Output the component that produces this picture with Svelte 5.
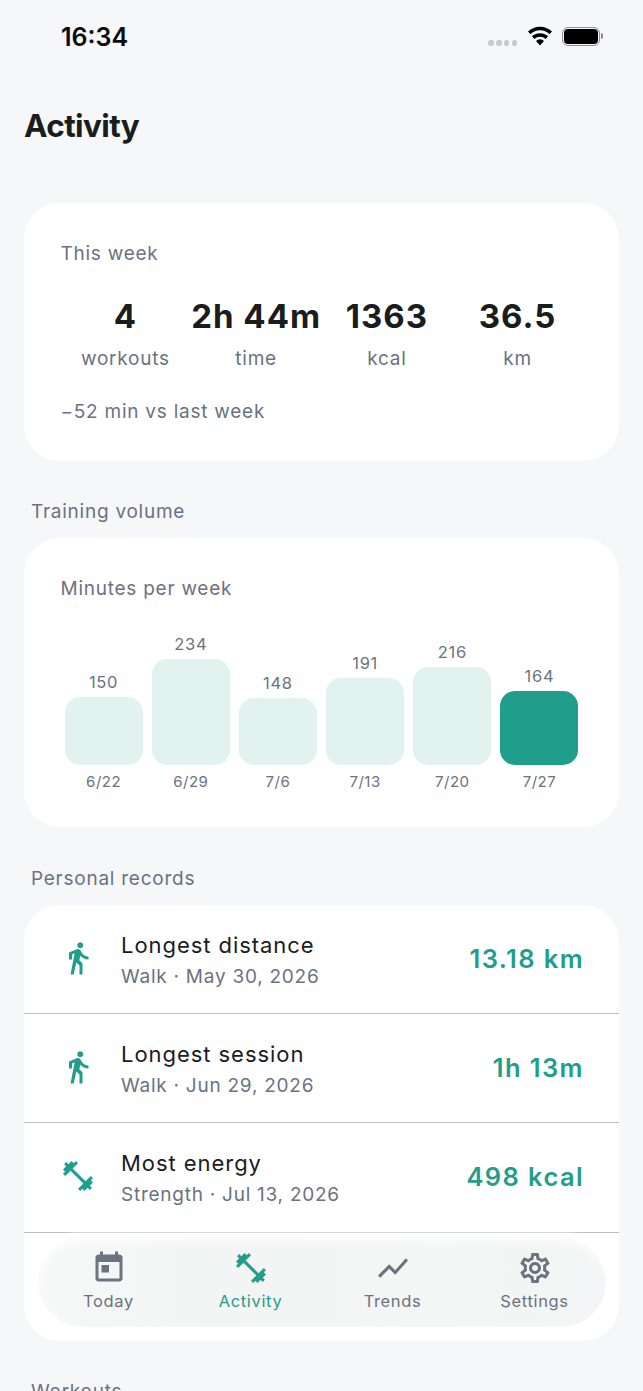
<script>
  const stats = [
    { value: "4", label: "workouts" },
    { value: "2h 44m", label: "time" },
    { value: "1363", label: "kcal" },
    { value: "36.5", label: "km" },
  ];

  const weeks = [
    { mins: 150, date: "6/22" },
    { mins: 234, date: "6/29" },
    { mins: 148, date: "7/6" },
    { mins: 191, date: "7/13" },
    { mins: 216, date: "7/20" },
    { mins: 164, date: "7/27", current: true },
  ];

  const records = [
    { icon: "walk", title: "Longest distance", sub: "Walk · May 30, 2026", value: "13.18 km" },
    { icon: "walk", title: "Longest session", sub: "Walk · Jun 29, 2026", value: "1h 13m" },
    { icon: "gym", title: "Most energy", sub: "Strength · Jul 13, 2026", value: "498 kcal" },
  ];

  const tabs = [
    { icon: "today", label: "Today" },
    { icon: "gym", label: "Activity", active: true },
    { icon: "chart", label: "Trends" },
    { icon: "gear", label: "Settings" },
  ];

  const paths = {
    walk: "M13.5 5.5c1.1 0 2-.9 2-2s-.9-2-2-2-2 .9-2 2 .9 2 2 2zM9.8 8.9L7 23h2.1l1.8-8 2.1 2v6h2v-7.5l-2.1-2 .6-3C14.8 12 16.8 13 19 13v-2c-1.9 0-3.5-1-4.3-2.4l-1-1.6c-.4-.6-1-1-1.7-1-.3 0-.5.1-.8.1L6 8.3V13h2V9.6l1.8-.7",
    gym: "M20.57 14.86L22 13.43 20.57 12 17 15.57 8.43 7 12 3.43 10.57 2 9.14 3.43 7.71 2 5.57 4.14 4.14 2.71 2.71 4.14l1.43 1.43L2 7.71l1.43 1.43L2 10.57 3.43 12 7 8.43 15.57 17 12 20.57 13.43 22l1.43-1.43L16.29 22l2.14-2.14 1.43 1.43 1.43-1.43-1.43-1.43L22 16.29z",
    today: "M19 3h-1V1h-2v2H8V1H6v2H5c-1.11 0-1.99.9-1.99 2L3 19c0 1.1.89 2 2 2h14c1.1 0 2-.9 2-2V5c0-1.1-.9-2-2-2zm0 16H5V8h14v11zM7 10h5v5H7z",
    chart: "M3.5 18.49l6-6.01 4 4L22 6.92l-1.41-1.41-7.09 7.97-4-4L2 16.99z",
    gear: "M19.43 12.98c.04-.32.07-.64.07-.98 0-.34-.03-.66-.07-.98l2.11-1.65c.19-.15.24-.42.12-.64l-2-3.46c-.09-.16-.26-.25-.44-.25-.06 0-.12.01-.17.03l-2.49 1c-.52-.4-1.08-.73-1.69-.98l-.38-2.65C14.46 2.18 14.25 2 14 2h-4c-.25 0-.46.18-.49.42l-.38 2.65c-.61.25-1.17.59-1.69.98l-2.49-1c-.06-.02-.12-.03-.18-.03-.17 0-.34.09-.43.25l-2 3.46c-.13.22-.07.49.12.64l2.11 1.65c-.04.32-.07.65-.07.98 0 .33.03.66.07.98l-2.11 1.65c-.19.15-.24.42-.12.64l2 3.46c.09.16.26.25.44.25.06 0 .12-.01.17-.03l2.49-1c.52.4 1.08.73 1.69.98l.38 2.65c.03.24.24.42.49.42h4c.25 0 .46-.18.49-.42l.38-2.65c.61-.25 1.17-.59 1.69-.98l2.49 1c.06.02.12.03.18.03.17 0 .34-.09.43-.25l2-3.46c.12-.22.07-.49-.12-.64l-2.11-1.65zm-1.98-1.71c.04.31.05.52.05.73 0 .21-.02.43-.05.73l-.14 1.13.89.7 1.08.84-.7 1.21-1.27-.51-1.04-.42-.9.68c-.43.32-.84.56-1.25.73l-1.06.43-.16 1.13-.2 1.35h-1.4l-.19-1.35-.16-1.13-1.06-.43c-.43-.18-.83-.41-1.23-.71l-.91-.7-1.06.43-1.27.51-.7-1.21 1.08-.84.89-.7-.14-1.13c-.03-.31-.05-.54-.05-.74s.02-.43.05-.73l.14-1.13-.89-.7-1.08-.84.7-1.21 1.27.51 1.04.42.9-.68c.43-.32.84-.56 1.25-.73l1.06-.43.16-1.13.2-1.35h1.39l.19 1.35.16 1.13 1.06.43c.43.18.83.41 1.23.71l.91.7 1.06-.43 1.27-.51.7 1.21-1.07.85-.89.7.14 1.13zM12 8c-2.21 0-4 1.79-4 4s1.79 4 4 4 4-1.79 4-4-1.79-4-4-4zm0 6c-1.1 0-2-.9-2-2s.9-2 2-2 2 .9 2 2-.9 2-2 2z",
  };
</script>

<div class="screen">
  <div class="status">
    <span class="clock">16:34</span>
    <div class="status-icons">
      <div class="dots"><i></i><i></i><i></i><i></i></div>
      <svg class="wifi" width="26" height="20" viewBox="0 0 26 20">
        <path d="M13 19.5l-4-4.6a5.8 5.8 0 0 1 8 0z" />
        <path d="M6.2 11.6a10 10 0 0 1 13.6 0" class="arc" />
        <path d="M2.2 6.8a15.8 15.8 0 0 1 21.6 0" class="arc" />
      </svg>
      <div class="battery"><div class="charge"></div></div>
    </div>
  </div>

  <h1>Activity</h1>

  <section class="card week">
    <p class="card-title">This week</p>
    <div class="stats">
      {#each stats as s}
        <div class="stat">
          <span class="stat-value">{s.value}</span>
          <span class="stat-label">{s.label}</span>
        </div>
      {/each}
    </div>
    <p class="delta">−52 min vs last week</p>
  </section>

  <h2>Training volume</h2>
  <section class="card volume">
    <p class="card-title">Minutes per week</p>
    <div class="chart">
      {#each weeks as w}
        <div class="col">
          <span class="mins">{w.mins}</span>
          <div class="bar" class:current={w.current} style="height: {w.mins * 0.4533}px"></div>
          <span class="date">{w.date}</span>
        </div>
      {/each}
    </div>
  </section>

  <h2>Personal records</h2>
  <section class="card records">
    {#each records as r}
      <div class="record">
        <svg class="record-icon" width="36" height="36" viewBox="0 0 24 24"><path d={paths[r.icon]} /></svg>
        <div class="record-text">
          <span class="record-title">{r.title}</span>
          <span class="record-sub">{r.sub}</span>
        </div>
        <span class="record-value">{r.value}</span>
      </div>
    {/each}
    <div class="record empty"></div>
  </section>

  <h2>Workouts</h2>

  <nav class="tabbar">
    {#each tabs as t}
      <div class="tab" class:active={t.active}>
        <svg width="36" height="36" viewBox="0 0 24 24"><path d={paths[t.icon]} /></svg>
        <span>{t.label}</span>
      </div>
    {/each}
  </nav>
</div>

<style>
  :global(body) {
    margin: 0;
    background: #f6f7f9;
  }

  .screen {
    position: relative;
    height: 1391px;
    overflow: hidden;
    padding: 0 24px;
    box-sizing: border-box;
    background: #f6f7f9;
    font-family: Inter, "Noto Sans", sans-serif;
    color: #1a1c1e;
  }

  /* status bar */
  .status {
    display: flex;
    justify-content: space-between;
    align-items: center;
    height: 36px;
    padding: 18px 19px 0 37px;
  }
  .clock {
    position: relative;
    top: 1px;
    font-size: 25px;
    font-weight: 600;
    color: #0b0b0c;
  }
  .status-icons {
    display: flex;
    align-items: center;
  }
  .dots {
    display: flex;
    gap: 2.2px;
    margin: 14px 10px 0 0;
  }
  .dots i {
    width: 5.5px;
    height: 5.5px;
    border-radius: 50%;
    background: #c9cacc;
  }
  .wifi {
    margin-right: 9px;
  }
  .wifi path {
    fill: #000;
  }
  .wifi .arc {
    fill: none;
    stroke: #000;
    stroke-width: 3.6;
  }
  .battery {
    position: relative;
    width: 34px;
    height: 15px;
    padding: 1px;
    border: 1.5px solid #8e8e90;
    border-radius: 6px;
  }
  .battery::after {
    content: "";
    position: absolute;
    right: -4px;
    top: 5px;
    width: 2px;
    height: 6px;
    border-radius: 0 2px 2px 0;
    background: #8e8e90;
  }
  .charge {
    width: 100%;
    height: 100%;
    border-radius: 4px;
    background: #000;
  }

  h1 {
    margin: 51px 0 0;
    font-size: 31.5px;
    line-height: 42px;
    font-weight: 700;
    letter-spacing: -0.6px;
  }

  h2 {
    margin: 0 0 14px 7px;
    font-size: 19px;
    line-height: 24px;
    font-weight: 400;
    letter-spacing: 0.75px;
    color: #6b7280;
  }

  .card {
    background: #fff;
    border-radius: 36px;
    margin-bottom: 39px;
  }

  .card-title {
    margin: 0;
    padding-left: 0.5px;
    font-size: 19px;
    line-height: 24px;
    letter-spacing: 0.75px;
    color: #6b7280;
  }

  /* this week */
  .week {
    margin-top: 56px;
    height: 258px;
    padding: 39px 36px 0;
    box-sizing: border-box;
  }
  .stats {
    display: flex;
    margin-top: 29px;
  }
  .stat {
    flex: 1 1 0;
    display: flex;
    flex-direction: column;
    align-items: center;
    white-space: nowrap;
  }
  .stat-value {
    font-size: 33px;
    line-height: 42px;
    font-weight: 700;
    letter-spacing: 1px;
  }
  .stat-label {
    margin-top: 10px;
    font-size: 19px;
    line-height: 24px;
    letter-spacing: 0.75px;
    color: #6b7280;
  }
  .delta {
    margin: 29px 0 0;
    padding-left: 0.5px;
    font-size: 19px;
    line-height: 24px;
    letter-spacing: 0.75px;
    color: #6b7280;
  }

  /* volume chart */
  .volume {
    height: 289px;
    margin-bottom: 40px;
    padding: 39px 36px 0;
    box-sizing: border-box;
  }
  .chart {
    display: flex;
    align-items: flex-end;
    height: 165px;
    margin-top: 26px;
  }
  .col {
    flex: 1 1 0;
    display: flex;
    flex-direction: column;
    align-items: center;
  }
  .mins {
    font-size: 16.5px;
    line-height: 22px;
    letter-spacing: 0.7px;
    color: #6b7280;
    margin-bottom: 4px;
  }
  .bar {
    width: 78px;
    border-radius: 15px;
    background: #e2f2ee;
  }
  .bar.current {
    background: #1f9e8c;
  }
  .date {
    margin-top: 7px;
    font-size: 15px;
    line-height: 20px;
    letter-spacing: 0.5px;
    color: #6b7280;
  }

  /* records */
  .records {
    height: 436px;
  }
  .record {
    display: flex;
    align-items: center;
    height: 108.2px;
    padding: 0 36px;
    border-bottom: 1px solid #bdbcc6;
  }
  .record.empty {
    border-bottom: 0;
  }
  .record-icon {
    flex: none;
    margin: -2px 25px 0 0;
    fill: #1f9e8c;
  }
  .record-text {
    flex: 1;
    display: flex;
    flex-direction: column;
    padding-top: 3px;
  }
  .record-title {
    font-size: 22px;
    line-height: 31px;
    letter-spacing: 0.95px;
    color: #1a1c1e;
  }
  .record-sub {
    font-size: 19px;
    line-height: 31px;
    letter-spacing: 0.75px;
    color: #6b7280;
  }
  .record-value {
    margin: -2px -1px 0 0;
    font-size: 25.5px;
    font-weight: 600;
    letter-spacing: 1.4px;
    color: #1f9e8c;
  }

  /* floating tab bar */
  .tabbar {
    position: absolute;
    left: 37.5px;
    right: 37.5px;
    top: 1237px;
    height: 90px;
    display: flex;
    border-radius: 45px;
    background: linear-gradient(90deg, #f6f7f7, #f3f4f4 30%, #f4f5f5 70%, #f3f6f6);
    box-shadow: 0 -2px 6px 2px rgba(255, 255, 255, 0.9), inset 0 8px 10px -3px rgba(255, 255, 255, 0.8), inset 8px 0 12px -4px rgba(255, 255, 255, 0.5);
  }
  .tab {
    flex: 1 1 0;
    display: flex;
    flex-direction: column;
    align-items: center;
    padding-top: 13px;
    fill: #6b7280;
    color: #6b7280;
    font-size: 16.5px;
    line-height: 22px;
    letter-spacing: 0.65px;
  }
  .tab svg {
    margin-bottom: 4px;
  }
  .tab.active {
    fill: #1f9e8c;
    color: #1f9e8c;
  }
</style>
